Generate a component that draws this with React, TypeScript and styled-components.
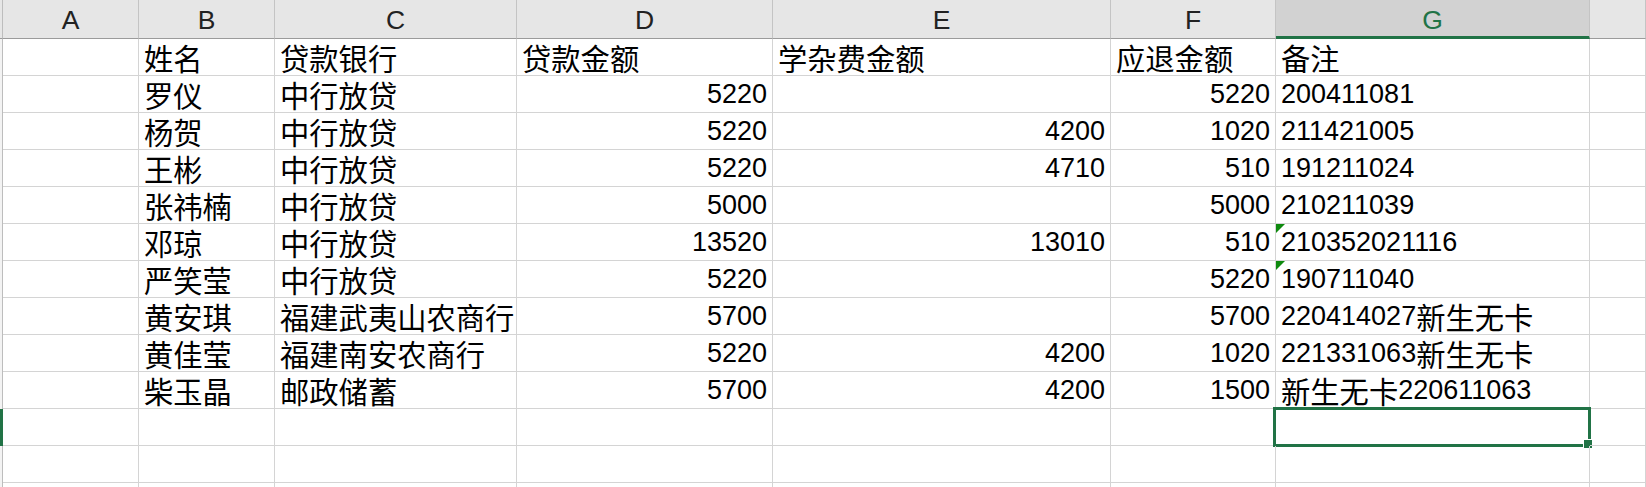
import React from "react";
import styled, { createGlobalStyle, css } from "styled-components";

const Global = createGlobalStyle`
  html, body { margin: 0; padding: 0; background: #ffffff; overflow: hidden; }
  * { box-sizing: border-box; }
`;

const GRID = "#d4d4d4";
const HEAD_BG = "#e6e6e6";
const HEAD_SEL_BG = "#d2d2d2";
const GREEN = "#217346";

const Sheet = styled.div`
  display: grid;
  grid-template-columns: 3px 136px 136px 242px 256px 338px 165px 314px 1fr;
  grid-template-rows: 39px;
  grid-auto-rows: 37px;
  width: 1646px;
  height: 487px;
  overflow: hidden;
  background: #fff;
`;

const Corner = styled.div`
  background: ${HEAD_BG};
  border-right: 1px solid #bdbdbd;
  border-bottom: 1px solid #9b9b9b;
`;

const ColHead = styled.div<{ $sel?: boolean }>`
  position: relative;
  display: flex;
  align-items: center;
  justify-content: center;
  padding-top: ${(p) => (p.$sel ? "4px" : "2px")};
  background: ${(p) => (p.$sel ? HEAD_SEL_BG : HEAD_BG)};
  border-right: 1px solid #c4c4c4;
  border-bottom: ${(p) => (p.$sel ? `3px solid ${GREEN}` : "1px solid #9b9b9b")};
  font-family: "Liberation Sans", Arial, sans-serif;
  font-size: 26.5px;
  line-height: 30px;
  color: ${(p) => (p.$sel ? GREEN : "#222")};
`;

const RowHead = styled.div<{ $sel?: boolean }>`
  background: ${(p) => (p.$sel ? GREEN : "#f3f3f3")};
  border-right: 1px solid ${(p) => (p.$sel ? GREEN : "#bdbdbd")};
`;

const Cell = styled.div<{ $right?: boolean; $flag?: boolean }>`
  position: relative;
  display: flex;
  align-items: flex-end;
  justify-content: ${(p) => (p.$right ? "flex-end" : "flex-start")};
  padding: 0 5px 3px 5px;
  border-right: 1px solid ${GRID};
  border-bottom: 1px solid ${GRID};
  font-family: "Noto Sans CJK SC", sans-serif;
  font-size: 29.3px;
  line-height: 30px;
  color: #000;
  white-space: nowrap;
  ${(p) =>
    p.$flag &&
    css`
      &::before {
        content: "";
        position: absolute;
        left: 0;
        top: 0;
        width: 0;
        height: 0;
        border-top: 9px solid #0f8a0f;
        border-right: 9px solid transparent;
      }
    `}
`;

const Han = styled.span`
  display: inline-block;
  font-family: "Noto Sans CJK SC", sans-serif;
  font-size: 29.3px;
  line-height: 30px;
`;

const Latin = styled.span`
  display: inline-block;
  font-family: "Liberation Sans", Arial, sans-serif;
  font-size: 27px;
  line-height: 30px;
`;

const Selection = styled.div`
  position: absolute;
  left: -3px;
  top: -2px;
  right: -2px;
  bottom: -2px;
  border: 3px solid ${GREEN};
  pointer-events: none;
  &::after {
    content: "";
    position: absolute;
    right: -4px;
    bottom: -4px;
    width: 8px;
    height: 8px;
    background: ${GREEN};
    border: 1px solid #fff;
    border-right: none;
    border-bottom: none;
  }
`;

function Text({ value }: { value: string }) {
  const runs = value.match(/[\u4e00-\u9fff]+|[^\u4e00-\u9fff]+/g) || [];
  return (
    <>
      {runs.map((r, i) =>
        /[\u4e00-\u9fff]/.test(r) ? <Han key={i}>{r}</Han> : <Latin key={i}>{r}</Latin>
      )}
    </>
  );
}

type Row = {
  name: string;
  bank: string;
  loan: string;
  fee: string;
  refund: string;
  note: string;
  flag?: boolean;
};

const header = ["姓名", "贷款银行", "贷款金额", "学杂费金额", "应退金额", "备注"];

const rows: Row[] = [
  { name: "罗仪", bank: "中行放贷", loan: "5220", fee: "", refund: "5220", note: "200411081" },
  { name: "杨贺", bank: "中行放贷", loan: "5220", fee: "4200", refund: "1020", note: "211421005" },
  { name: "王彬", bank: "中行放贷", loan: "5220", fee: "4710", refund: "510", note: "191211024" },
  { name: "张祎楠", bank: "中行放贷", loan: "5000", fee: "", refund: "5000", note: "210211039" },
  { name: "邓琼", bank: "中行放贷", loan: "13520", fee: "13010", refund: "510", note: "210352021116", flag: true },
  { name: "严笑莹", bank: "中行放贷", loan: "5220", fee: "", refund: "5220", note: "190711040", flag: true },
  { name: "黄安琪", bank: "福建武夷山农商行", loan: "5700", fee: "", refund: "5700", note: "220414027新生无卡" },
  { name: "黄佳莹", bank: "福建南安农商行", loan: "5220", fee: "4200", refund: "1020", note: "221331063新生无卡" },
  { name: "柴玉晶", bank: "邮政储蓄", loan: "5700", fee: "4200", refund: "1500", note: "新生无卡220611063" },
];

const letters = ["A", "B", "C", "D", "E", "F", "G", ""];

export default function App() {
  return (
    <>
      <Global />
      <Sheet>
        <Corner />
        {letters.map((l, i) => (
          <ColHead key={i} $sel={l === "G"}>
            {l}
          </ColHead>
        ))}

        <RowHead />
        <Cell />
        {header.map((h, i) => (
          <Cell key={i}>
            <Text value={h} />
          </Cell>
        ))}
        <Cell />

        {rows.map((r, i) => (
          <React.Fragment key={i}>
            <RowHead />
            <Cell />
            <Cell>
              <Text value={r.name} />
            </Cell>
            <Cell>
              <Text value={r.bank} />
            </Cell>
            <Cell $right>
              {r.loan && <Text value={r.loan} />}
            </Cell>
            <Cell $right>
              {r.fee && <Text value={r.fee} />}
            </Cell>
            <Cell $right>
              <Text value={r.refund} />
            </Cell>
            <Cell $flag={r.flag}>
              <Text value={r.note} />
            </Cell>
            <Cell />
          </React.Fragment>
        ))}

        {[0, 1, 2].map((k) => (
          <React.Fragment key={`e${k}`}>
            <RowHead $sel={k === 0} />
            <Cell />
            <Cell />
            <Cell />
            <Cell />
            <Cell />
            <Cell />
            <Cell>{k === 0 && <Selection />}</Cell>
            <Cell />
          </React.Fragment>
        ))}
      </Sheet>
    </>
  );
}
